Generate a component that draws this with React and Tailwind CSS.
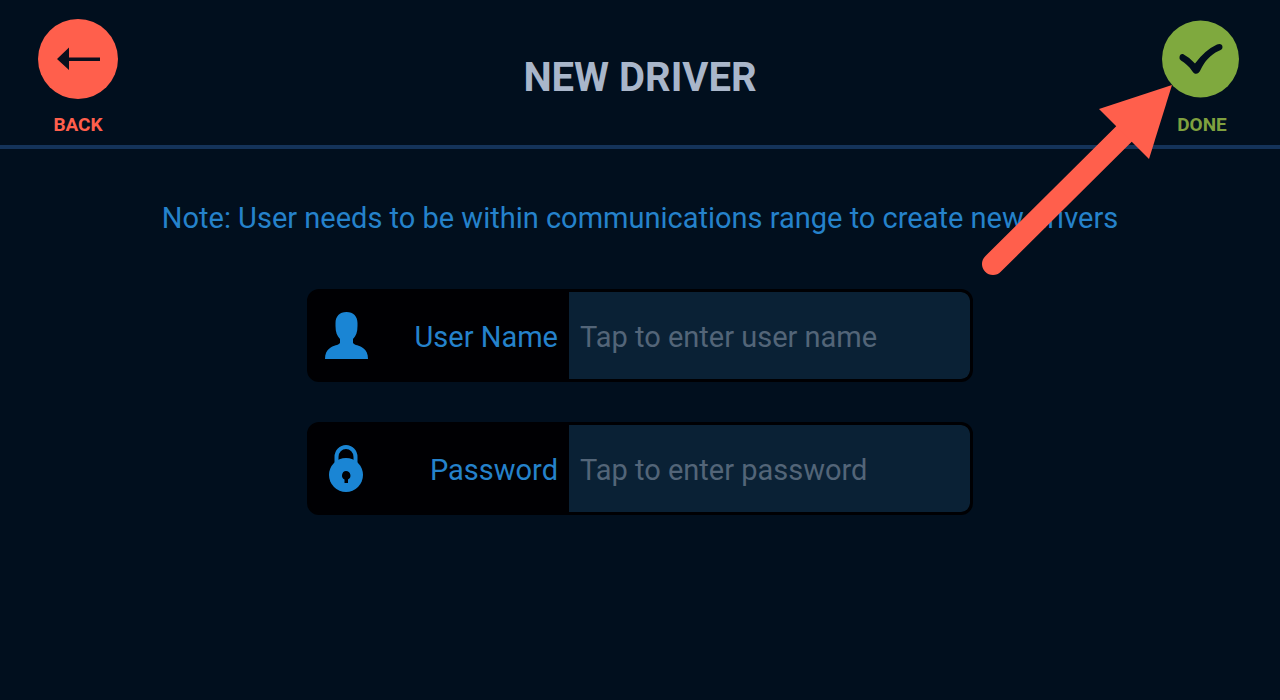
import React from 'react';

const ArrowLeftIcon = () => (
  <svg viewBox="0 0 80 80" className="size-20" aria-hidden="true">
    <circle cx="40" cy="40" r="40" fill="#ff5f4c" />
    <path d="M19 40L31 28.500V38.500H62V42H31V51Z" fill="#0a0f1d" />
  </svg>
);

const CheckIcon = () => (
  <svg viewBox="0 0 80 80" className="size-20" aria-hidden="true">
    <circle cx="38.500" cy="40" r="38.500" fill="#7fa93e" />
    <path
      d="M17.500 38Q18 34.500 21 35Q27 38 33 44.500Q43 31 55 25.500C58 24 60.500 25.500 60.500 28C60.500 30.500 59 31 56.500 32C48 36 43 42 38.500 51C37 55 33 56.500 30.500 52.500C27 47 23 44 19 41.500Q17 40 17.500 38Z"
      fill="#010e1d"
    />
  </svg>
);

const UserIcon = () => (
  <svg viewBox="0 0 44 48" className="h-12 w-11" fill="#1a85d4" aria-hidden="true">
    <path d="M22.500 0C29.500 0 33.500 4.500 33.500 11V14C33.500 20 32 24 29 27V31C31 33.500 35 33 39 36C42.500 38.500 44 42 44 47H1C1 42 2.500 38.500 6 36C10 33 14 33.500 16 31V27C13 24 11.500 20 11.500 14V11C11.500 4.500 15.500 0 22.500 0Z" />
  </svg>
);

const LockIcon = () => (
  <svg viewBox="0 0 44 48" className="h-12 w-11" aria-hidden="true">
    <path d="M12.500 20V12A9.500 10 0 0 1 31.500 12V20" fill="none" stroke="#1a85d4" strokeWidth="4" />
    <circle cx="22" cy="30" r="17" fill="#1a85d4" />
    <path d="M22 26A4.500 4.500 0 0 1 24 34.500V38H20.500V34.500A4.500 4.500 0 0 1 22 26Z" fill="#000003" />
  </svg>
);

const HeaderButton = ({ label, className, children }) => (
  <button type="button" className={`flex flex-col items-center gap-3 text-[19px] leading-7 font-bold ${className}`}>
    {children}
    <span>{label}</span>
  </button>
);

const Field = ({ id, label, icon, ...inputProps }) => (
  <div className="flex h-[93px] overflow-hidden rounded-xl border-[3px] border-[#000003] bg-[#000003]">
    <label htmlFor={id} className="flex w-[259px] shrink-0 items-center justify-between pt-0.5 pr-[11px] pl-[14px] text-[#2582cb]">
      {icon}
      <span className="pt-1">{label}</span>
    </label>
    <input
      id={id}
      className="min-w-0 flex-1 rounded-r-lg bg-[#0a2135] px-[11px] pt-1.5 text-[#a9b8cc] outline-none placeholder:text-[#536578]"
      {...inputProps}
    />
  </div>
);

const PointerArrow = () => (
  <svg
    viewBox="0 0 200 200"
    className="pointer-events-none absolute top-20 right-[100px] size-[200px]"
    aria-hidden="true"
  >
    <path d="M13 184L150 48" stroke="#ff5f4c" strokeWidth="22" strokeLinecap="round" />
    <path d="M192 5L119 29L169 79Z" fill="#ff5f4c" />
  </svg>
);

const App = () => {
  return (
    <div className="relative min-h-screen bg-[#010f1e] font-[Roboto,sans-serif]">
      {/* Header */}
      <header className="flex items-center justify-between border-b-4 border-[#14335a] px-[38px] pt-[19px] pb-[6px]">
        <HeaderButton label="BACK" className="text-[#ff5f4c]">
          <ArrowLeftIcon />
        </HeaderButton>
        <h1 className="pb-0.5 text-center text-[40px] font-bold text-[#a9b6ca]">NEW DRIVER</h1>
        <HeaderButton label="DONE" className="text-[#7fa03f]">
          <CheckIcon />
        </HeaderButton>
      </header>

      {/* Driver form */}
      <main className="px-6 pt-12 text-[29px]">
        <p className="text-center text-[#2582cb]">
          Note: User needs to be within communications range to create new drivers
        </p>
        <form className="mx-auto mt-12 flex max-w-[666px] flex-col gap-10">
          <Field id="username" label="User Name" icon={<UserIcon />} type="text" placeholder="Tap to enter user name" />
          <Field id="password" label="Password" icon={<LockIcon />} type="password" placeholder="Tap to enter password" />
        </form>
      </main>

      <PointerArrow />
    </div>
  );
};

export default App;
